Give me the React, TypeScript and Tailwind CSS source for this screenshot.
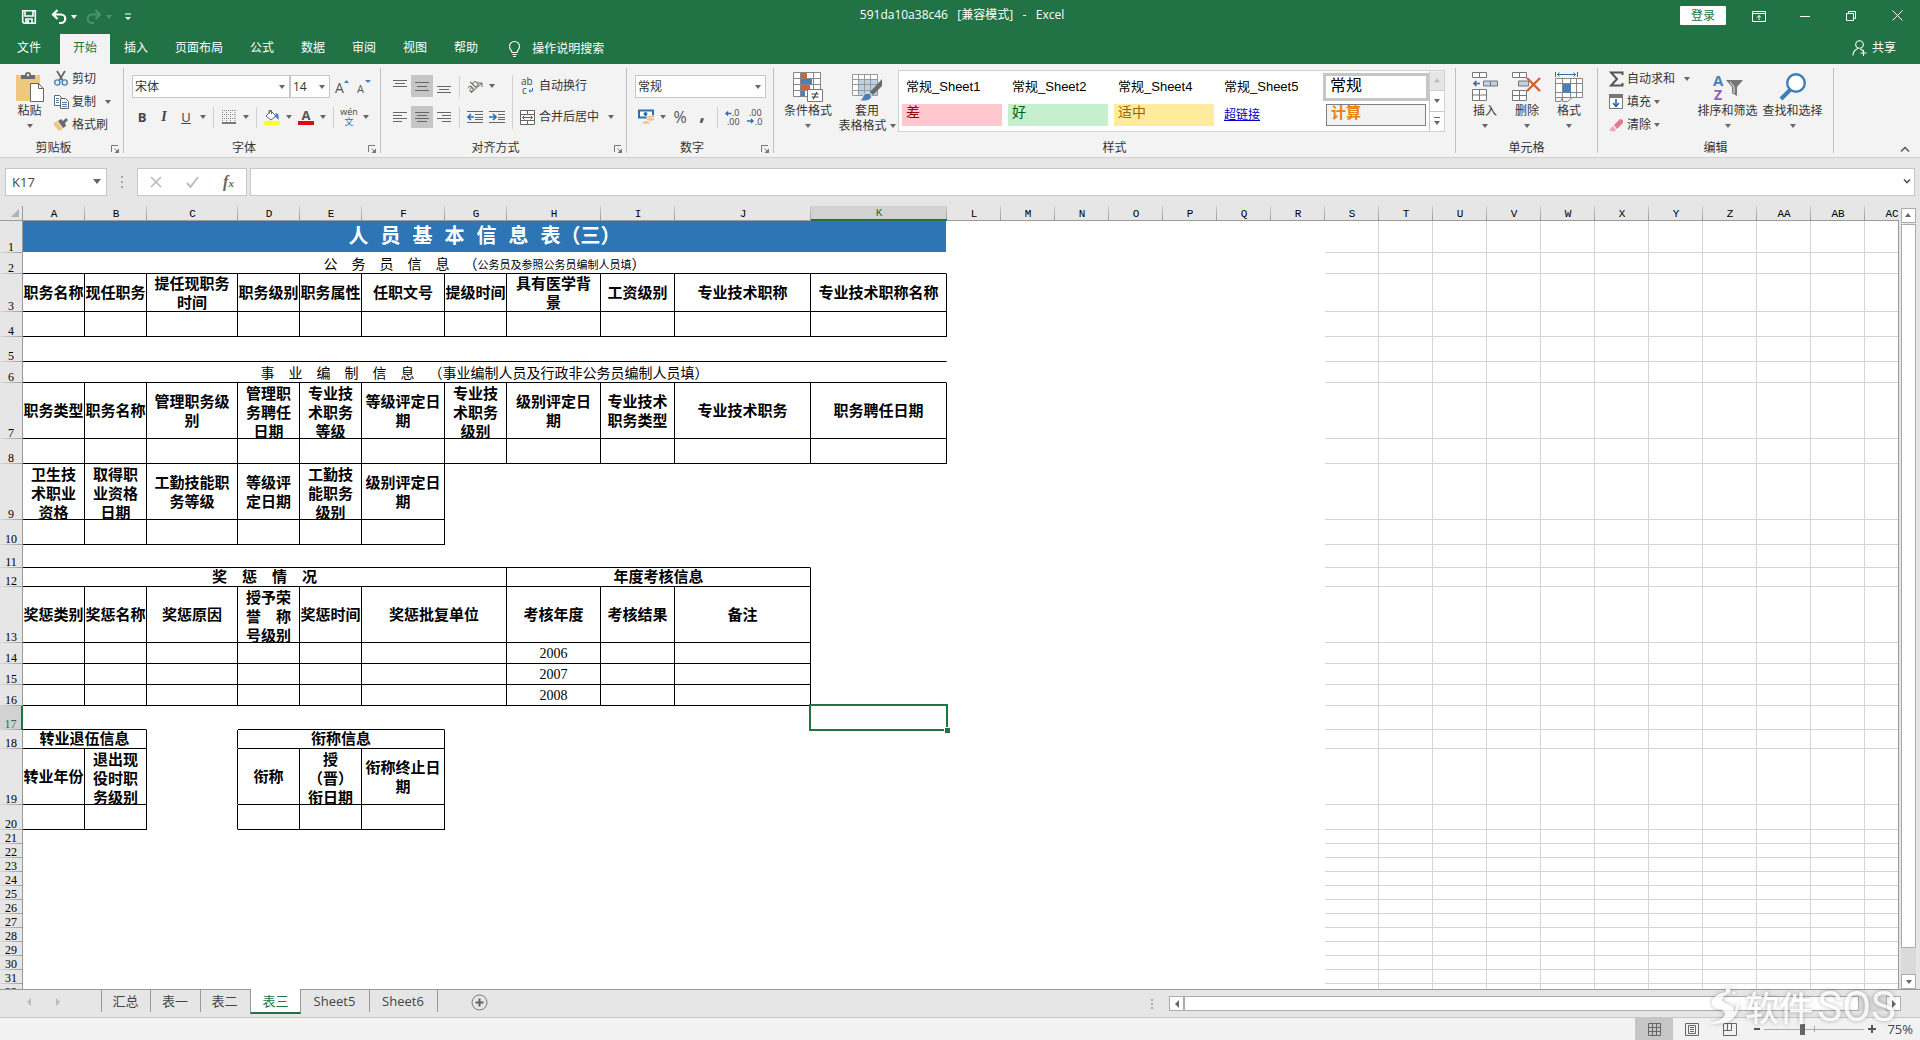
import React from "react";

type IconProps = { children: React.ReactNode; w?: number; h?: number };

function Svg({ children, w = 16, h = 16 }: IconProps) {
  return (
    <svg width={w} height={h} viewBox={`0 0 ${w} ${h}`} fill="none" className="shrink-0 overflow-visible" aria-hidden="true">
      {children}
    </svg>
  );
}

function Caret({ color = "#666" }: { color?: string }) {
  return (
    <Svg w={6} h={4}>
      <path d="M0 0h6L3 4z" fill={color} />
    </Svg>
  );
}

/* ---------- Title bar and ribbon tabs ---------- */

function TitleBar() {
  return (
    <header className="flex h-[34px] items-start justify-between bg-[#217346] text-white">
      <div className="flex h-[34px] flex-1 items-center pl-[21px]">
        <button aria-label="保存" className="mr-[14px]">
          <Svg w={16} h={16}>
            <path d="M1.7 1.7h12.6v12.6H3L1.7 13z M4 2v5h8V2 M5 14v-4h6v4" stroke="#fff" strokeWidth="1.6" />
            <path d="M6 11h2v3H6z" fill="#fff" />
          </Svg>
        </button>
        <button aria-label="撤消" className="flex items-center gap-[4px]">
          <Svg w={16} h={16}>
            <path d="M2 5.5h8a4 4 0 0 1 0 8.5H8M6.5 1L2 5.5 6.5 10" stroke="#fff" strokeWidth="2.2" />
          </Svg>
          <Caret color="#fff" />
        </button>
        <button aria-label="恢复" className="ml-[9px] flex items-center gap-[4px]">
          <Svg w={16} h={16}>
            <path d="M14 5.5H6A4 4 0 0 0 6 14h2M9.500 1L14 5.500 9.500 10" stroke="#4f9070" strokeWidth="2" />
          </Svg>
          <Caret color="#4f9070" />
        </button>
        <button aria-label="自定义快速访问工具栏" className="ml-[12px]">
          <Svg w={8} h={8}>
            <path d="M1 1h6" stroke="#fff" />
            <path d="M1 4h6L4 7z" fill="#fff" />
          </Svg>
        </button>
      </div>
      <h1 className="mt-[7px] whitespace-pre text-xs leading-4">591da10a38c46   [兼容模式]   -   Excel</h1>
      <div className="flex flex-1 items-center justify-end pr-[17px] pt-[6px]">
        <button className="mr-[26px] h-[19px] w-[46px] rounded-[1px] bg-white text-xs leading-4 text-[#217346]">登录</button>
        <button aria-label="功能区显示选项" className="mr-[34px]">
          <Svg w={14} h={12}>
            <path d="M.5 1.500h13v10H.5zM.5 3.500h13M7 10V5.500M5 7.500l2-2 2 2" stroke="#fff" />
          </Svg>
        </button>
        <button aria-label="最小化" className="mr-[36px]">
          <Svg w={10} h={10}>
            <path d="M0 5.500h10" stroke="#fff" />
          </Svg>
        </button>
        <button aria-label="还原" className="mr-[36px]">
          <Svg w={10} h={10}>
            <path d="M.5 2.500h7v7h-7zM2.500 2.500v-2h7v7h-2" stroke="#fff" />
          </Svg>
        </button>
        <button aria-label="关闭">
          <Svg w={11} h={11}>
            <path d="M.5.5l10 10M10.500.5l-10 10" stroke="#fff" />
          </Svg>
        </button>
      </div>
    </header>
  );
}

const ribbonTabs = ["插入", "页面布局", "公式", "数据", "审阅", "视图", "帮助"];

function RibbonTabs() {
  return (
    <nav className="flex h-[30px] items-stretch gap-px bg-[#217346] text-xs leading-4 text-white">
      <div className="flex">
        <button className="w-[60px] pb-[3px] pr-[2px]">文件</button>
        <button className="bg-[#f3f3f3] px-[13px] pb-[3px] text-[#217346]">开始</button>
      </div>
      {ribbonTabs.map((t) => (
        <button key={t} className="px-[13px] pb-[3px]">
          {t}
        </button>
      ))}
      <button className="ml-4 flex items-center gap-[11px]">
        <Svg w={13} h={17}>
          <path d="M4 11.500C4 9.500 1.500 8.500 1.500 5.500a5 5 0 0 1 10 0c0 3-2.500 4-2.500 6zM4.500 13.500h4M5 15.500h3" stroke="#fff" strokeWidth="1.100" />
        </Svg>
        操作说明搜索
      </button>
      <button className="ml-auto mr-6 flex items-center gap-[5px] pb-[2px]">
        <Svg w={15} h={16}>
          <circle cx="7.500" cy="4.500" r="3.800" stroke="#fff" strokeWidth="1.100" />
          <path d="M1 15.500c0-4 2-6 5-7M8.500 9c1 .3 1.800 1 2.300 2M11.500 10v6M8.500 13h6" stroke="#fff" strokeWidth="1.100" />
        </Svg>
        共享
      </button>
    </nav>
  );
}

/* ---------- Ribbon ---------- */

function Group({ label, launcher, width, children }: { label: string; launcher?: boolean; width: string; children: React.ReactNode }) {
  return (
    <section aria-label={label} className={`flex shrink-0 ${width}`}>
      <div className="flex min-w-0 flex-1 flex-col">
        <div className="flex flex-1 items-start">{children}</div>
        <div className="flex h-[19px] items-center text-xs leading-4 text-[#333]">
          <span className="flex-1 text-center">{label}</span>
          {launcher && (
            <button aria-label={`${label}设置`} className="mt-1 w-4 pl-1">
              <Svg w={9} h={9}>
                <path d="M.5 7V.5H7M3.500 3.500l3 3" stroke="#777" />
                <path d="M8 3.500V8H3.500z" fill="#777" />
              </Svg>
            </button>
          )}
        </div>
      </div>
      <div className="mt-1 h-[85px] w-px bg-[#c0c0c0]" />
    </section>
  );
}

function Big({ icon, lines, width, inlineCaret }: { icon: React.ReactNode; lines: string[]; width: string; inlineCaret?: boolean }) {
  return (
    <button className={`flex flex-col items-center pt-2 text-xs leading-[15px] text-[#333] ${width}`}>
      <span className="mb-px flex h-[30px] items-center">{icon}</span>
      <span className="whitespace-nowrap">{lines[0]}</span>
      {inlineCaret ? (
        <span className="flex items-center gap-[3px] whitespace-nowrap">
          {lines[1]}
          <Caret />
        </span>
      ) : (
        <span className="flex h-[15px] items-center">
          <Caret />
        </span>
      )}
    </button>
  );
}

function SmallRow({ icon, text, caret }: { icon: React.ReactNode; text: string; caret?: "near" | "far" }) {
  return (
    <button className="flex h-[23px] items-center whitespace-nowrap text-xs leading-4 text-[#333]">
      <span className="mr-[3px] flex w-4 justify-center">{icon}</span>
      {text}
      {caret && (
        <span className={caret === "far" ? "ml-[9px]" : "ml-[3px]"}>
          <Caret />
        </span>
      )}
    </button>
  );
}

function Tool({ label, active, children }: { label: string; active?: boolean; children: React.ReactNode }) {
  return (
    <button aria-label={label} className={`flex h-[22px] w-[22px] items-center justify-center ${active ? "bg-[#c6c6c6]" : ""}`}>
      {children}
    </button>
  );
}

function Drop({ label }: { label: string }) {
  return (
    <button aria-label={label} className="flex h-[22px] w-3 items-center justify-center">
      <Caret />
    </button>
  );
}

const Sep = () => <span className="mx-1 h-[21px] w-px bg-[#d0d0d0]" />;

function Combo({ label, value, width }: { label: string; value: string; width: string }) {
  return (
    <span className={`relative flex ${width}`}>
      <select aria-label={label} className="h-[23px] w-full appearance-none border border-[#c6c6c6] bg-white px-[2px] text-xs leading-4 text-[#333]">
        <option>{value}</option>
      </select>
      <span className="pointer-events-none absolute right-[5px] top-[10px]">
        <Caret />
      </span>
    </span>
  );
}

function Bars({ rows }: { rows: [number, number, number][] }) {
  return (
    <Svg w={14} h={16}>
      {rows.map(([x, y, w]) => (
        <path key={y} d={`M${x} ${y + 0.5}h${w}`} stroke="#666" />
      ))}
    </Svg>
  );
}

const TextIcon = ({ x, y, size, fill, children, bold }: { x: number; y: number; size: number; fill: string; children: string; bold?: boolean }) => (
  <text x={x} y={y} fontSize={size} fill={fill} fontWeight={bold ? 700 : 400}>
    {children}
  </text>
);

function ClipboardGroup() {
  return (
    <Group label="剪贴板" launcher width="w-[124px]">
      <div className="w-[6px]" />
      <Big
        width="w-[47px]"
        lines={["粘贴"]}
        icon={
          <Svg w={28} h={30}>
            <rect x="0" y="3" width="24" height="26" fill="#edc87e" />
            <path d="M5 7V3h4a3 3 0 0 1 6 0h4v4z" fill="#6b6b6b" />
            <circle cx="12" cy="3" r="1.200" fill="#f3f3f3" />
            <path d="M14.500 11.500h8l5 5v13h-13z" fill="#fff" stroke="#666" />
            <path d="M22.500 11.500v5h5" stroke="#666" />
          </Svg>
        }
      />
      <div className="flex flex-col pt-[3px]">
        <SmallRow
          text="剪切"
          icon={
            <Svg w={14} h={15}>
              <path d="M3 0l5.500 9M11 0L5.500 9" stroke="#666" strokeWidth="1.800" />
              <circle cx="3.300" cy="11.500" r="2.600" stroke="#4a80b5" strokeWidth="1.400" />
              <circle cx="10.700" cy="11.500" r="2.600" stroke="#4a80b5" strokeWidth="1.400" />
            </Svg>
          }
        />
        <SmallRow
          text="复制"
          caret="far"
          icon={
            <Svg w={15} h={14}>
              <path d="M.5.5h5l2 2v8h-7z" fill="#fff" stroke="#666" />
              <path d="M6.500 3.500h5l3 3v7h-8z" fill="#fff" stroke="#666" />
              <path d="M2 3.500h3M2 5.500h3M2 7.500h3M8 7.500h5M8 9.500h5M8 11.500h5" stroke="#4a80b5" />
            </Svg>
          }
        />
        <SmallRow
          text="格式刷"
          icon={
            <Svg w={16} h={14}>
              <path d="M0 6l6 7 4-2-6-8z" fill="#edc87e" />
              <path d="M5 3l5 7 3-2-1-3 3-3-2-2-3 3-2-2z" fill="#6b6b6b" />
            </Svg>
          }
        />
      </div>
    </Group>
  );
}

function FontGroup() {
  return (
    <Group label="字体" launcher width="w-[257px]">
      <div className="flex flex-col gap-2 pl-[7px] pt-[11px] text-[#444]">
        <div className="flex items-center pl-px">
          <Combo label="字体名称" value="宋体" width="w-[158px]" />
          <Combo label="字号" value="14" width="w-10" />
          <Tool label="增大字号">
            <Svg w={15} h={16}>
              <TextIcon x={1} y={14} size={14} fill="#555">A</TextIcon>
              <path d="M10 4l2.500-3L15 4z" fill="#4a80b5" />
            </Svg>
          </Tool>
          <Tool label="减小字号">
            <Svg w={15} h={16}>
              <TextIcon x={1} y={14} size={11} fill="#555">A</TextIcon>
              <path d="M9 1h6l-3 3z" fill="#4a80b5" />
            </Svg>
          </Tool>
        </div>
        <div className="flex items-center text-[13px] leading-4">
          <Tool label="加粗"><b>B</b></Tool>
          <Tool label="倾斜"><i className="font-['Liberation_Serif',serif] text-sm font-bold">I</i></Tool>
          <Tool label="下划线"><u>U</u></Tool>
          <Drop label="下划线选项" />
          <Sep />
          <Tool label="边框">
            <Svg w={14} h={14}>
              <path d="M.5 0v13M4.500 0v13M8.500 0v13M13 0v13M0 .5h13M0 4.500h13M0 8.500h13" stroke="#888" strokeDasharray="1 1" />
              <path d="M0 13h14" stroke="#555" strokeWidth="1.500" />
            </Svg>
          </Tool>
          <Drop label="边框选项" />
          <Sep />
          <Tool label="填充颜色">
            <Svg w={17} h={16}>
              <path d="M2 7l5-5 5 5-5 4z" fill="#fff" stroke="#666" />
              <path d="M5 5V1.500h2.500V5" stroke="#666" />
              <path d="M12 4c3 1 3 4 2.500 7-1-1-2-3-4-3z" fill="#4a80b5" />
              <rect y="12" width="16" height="4" fill="#ff2" />
            </Svg>
          </Tool>
          <Drop label="填充颜色选项" />
          <Tool label="字体颜色">
            <Svg w={16} h={16}>
              <TextIcon x={3.5} y={11} size={13} fill="#555" bold>A</TextIcon>
              <rect y="12" width="16" height="4" fill="#e00b0b" />
            </Svg>
          </Tool>
          <Drop label="字体颜色选项" />
          <Sep />
          <Tool label="拼音">
            <span className="flex flex-col text-center text-[9px] leading-[10px]">
              <span>wén</span>
              <span className="text-[#2f6fae]">文</span>
            </span>
          </Tool>
          <Drop label="拼音选项" />
        </div>
      </div>
    </Group>
  );
}

function AlignGroup() {
  return (
    <Group label="对齐方式" launcher width="w-[246px]">
      <div className="flex pl-2 pt-[11px] text-xs leading-4 text-[#333]">
        <div className="flex flex-col gap-[9px]">
          <div className="flex items-center">
            <Tool label="顶端对齐"><Bars rows={[[0, 2, 14], [2, 5, 10], [0, 8, 14]]} /></Tool>
            <Tool label="垂直居中" active><Bars rows={[[0, 4, 14], [2, 8, 10], [0, 12, 14]]} /></Tool>
            <Tool label="底端对齐"><Bars rows={[[0, 8, 14], [2, 11, 10], [0, 14, 14]]} /></Tool>
            <Sep />
            <Tool label="方向">
              <Svg w={16} h={16}>
                <g transform="rotate(-45 8 8)"><TextIcon x={0} y={10} size={11} fill="#555">ab</TextIcon></g>
                <path d="M4 15L15 5M15 9V5h-4" stroke="#666" />
              </Svg>
            </Tool>
            <Drop label="方向选项" />
          </div>
          <div className="flex items-center">
            <Tool label="左对齐"><Bars rows={[[0, 3, 14], [0, 6, 9], [0, 9, 14], [0, 12, 9]]} /></Tool>
            <Tool label="居中" active><Bars rows={[[0, 3, 14], [2, 6, 10], [0, 9, 14], [2, 12, 10]]} /></Tool>
            <Tool label="右对齐"><Bars rows={[[0, 3, 14], [5, 6, 9], [0, 9, 14], [5, 12, 9]]} /></Tool>
            <Sep />
            <Tool label="减少缩进量">
              <Svg w={16} h={14}>
                <path d="M0 1.500h16M8 4.500h8M8 7.500h8M8 9.500h8M0 12.500h16" stroke="#666" />
                <path d="M7 7H2M4 4L1 7l3 3" stroke="#2f6fae" strokeWidth="1.700" />
              </Svg>
            </Tool>
            <Tool label="增加缩进量">
              <Svg w={16} h={14}>
                <path d="M0 1.500h16M9 4.500h7M9 7.500h7M9 9.500h7M0 12.500h16" stroke="#666" />
                <path d="M0 7h6M4 4l3 3-3 3" stroke="#2f6fae" strokeWidth="1.700" />
              </Svg>
            </Tool>
          </div>
        </div>
        <span className="ml-1 h-[54px] w-px bg-[#d0d0d0]" />
        <div className="ml-[7px] flex flex-col gap-[9px]">
          <button className="flex h-[22px] items-center gap-1">
            <Svg w={15} h={16}>
              <TextIcon x={1} y={7} size={10} fill="#444">ab</TextIcon>
              <TextIcon x={2} y={16} size={10} fill="#444">c</TextIcon>
              <path d="M12.500 10v3H9M10.500 11.500L9 13l1.500 1.500" stroke="#2f6fae" />
            </Svg>
            自动换行
          </button>
          <button className="flex h-[22px] items-center gap-1">
            <Svg w={15} h={15}>
              <path d="M.5.5h14v14H.5zM.5 4.500h14M.5 10.500h14M7.500.5v4M7.500 10.500v4" fill="#fff" stroke="#666" />
              <path d="M2.500 7.500h10M4.500 5.500l-2 2 2 2M10.500 5.500l2 2-2 2" stroke="#2f6fae" />
            </Svg>
            合并后居中
            <span className="ml-[5px]"><Caret /></span>
          </button>
        </div>
      </div>
    </Group>
  );
}

function NumberGroup() {
  return (
    <Group label="数字" launcher width="w-[147px]">
      <div className="flex flex-col gap-2 pl-2 pt-[11px]">
        <Combo label="数字格式" value="常规" width="w-[131px]" />
        <div className="flex items-center text-base leading-4 text-[#555]">
          <Tool label="会计数字格式">
            <Svg w={17} h={16}>
              <path d="M1 1.500h14v7H1z" fill="#fff" stroke="#2f6fae" strokeWidth="2" />
              <circle cx="7.500" cy="5" r="2" fill="#2f6fae" />
              <ellipse cx="12.500" cy="8" rx="4" ry="1.700" fill="#edc08a" stroke="#fff" strokeWidth=".6" />
              <ellipse cx="12.500" cy="10.500" rx="4" ry="1.700" fill="#edc08a" stroke="#fff" strokeWidth=".6" />
              <ellipse cx="8" cy="13.500" rx="4" ry="1.700" fill="#edc08a" stroke="#fff" strokeWidth=".6" />
            </Svg>
          </Tool>
          <Drop label="会计数字格式选项" />
          <Tool label="百分比样式">%</Tool>
          <Tool label="千位分隔样式"><b className="pb-2 text-xl leading-4">,</b></Tool>
          <Sep />
          <Tool label="增加小数位数">
            <Svg w={16} h={16}>
              <TextIcon x={7} y={7} size={9} fill="#444">.0</TextIcon>
              <TextIcon x={2} y={16} size={9} fill="#444">.00</TextIcon>
              <path d="M6.500 4.500H1M3 2.500l-2 2 2 2" stroke="#2f6fae" strokeWidth="1.400" />
            </Svg>
          </Tool>
          <Tool label="减少小数位数">
            <Svg w={16} h={16}>
              <TextIcon x={2} y={7} size={9} fill="#444">.00</TextIcon>
              <TextIcon x={8} y={16} size={9} fill="#444">.0</TextIcon>
              <path d="M0 12h6M4 10l2 2-2 2" stroke="#2f6fae" strokeWidth="1.400" />
            </Svg>
          </Tool>
        </div>
      </div>
    </Group>
  );
}

function StylesGroup() {
  const plain = "flex h-7 items-center pl-[7px] text-[13px] leading-4 text-black";
  const chip = "mx-[3px] flex h-[22px] items-start px-1 text-sm leading-4";
  return (
    <Group label="样式" width="w-[682px]">
      <div className="w-[9px]" />
      <Big
        width="w-[50px]"
        lines={["条件格式"]}
        icon={
          <Svg w={30} h={30}>
            <path d="M.5.5h27v24H.5zM.5 6.500h27M.5 12.500h27M.5 18.500h27M7.500.5v24M20.500.5v24" fill="#fff" stroke="#888" />
            <path d="M8 1h6v5H8zM8 13h9v5H8z" fill="#d2603a" />
            <path d="M8 7h11v5H8zM8 19h4v5H8z" fill="#4a80b5" />
            <path d="M14.500 17.500h15v12h-15z" fill="#fff" stroke="#777" />
            <path d="M18.500 22h7M18.500 25h7M24 20l-4 7.500" stroke="#444" strokeWidth="1.200" />
          </Svg>
        }
      />
      <div className="w-[3px]" />
      <Big
        width="w-[62px]"
        lines={["套用", "表格格式"]}
        inlineCaret
        icon={
          <Svg w={30} h={30}>
            <path d="M.5 2.500h25v21H.5z" fill="#fff" />
            <path d="M7 8h18v15H7z" fill="#bcd0e6" />
            <path d="M.5 2.500h25v21H.5zM.5 7.500h25M.5 12.500h25M.5 18.500h25M6.500 2.500v21M12.500 2.500v21M18.500 2.500v21" stroke="#999" />
            <path d="M30 7v7l-9 9-3-3z" fill="#6b6b6b" />
            <path d="M7 29c4-1 3-7 8-8 3-.5 6 3 3.500 6-2.500 2.500-7 2-11.500 2z" fill="#4a80b5" stroke="#f3f3f3" />
          </Svg>
        }
      />
      <div className="mt-[6px] flex h-[62px] border border-[#d0d0d0] bg-white">
        <div className="grid grid-cols-[repeat(5,106px)] content-start gap-y-[3px] pt-[2px] text-left font-['Liberation_Sans','Noto_Sans_CJK_SC',sans-serif]">
          <button className={plain}>常规_Sheet1</button>
          <button className={plain}>常规_Sheet2</button>
          <button className={plain}>常规_Sheet4</button>
          <button className={plain}>常规_Sheet5</button>
          <button className="flex h-7 items-center border-[3px] border-[#c6c6c6] px-1 pb-[2px] text-base leading-4 text-black">常规</button>
          <button className={`${chip} bg-[#ffc7ce] text-[#9c0006]`}>差</button>
          <button className={`${chip} bg-[#c6efce] text-[#006100]`}>好</button>
          <button className={`${chip} bg-[#ffeb9c] text-[#9c6500]`}>适中</button>
          <a href="#link" className="flex h-[22px] items-center pl-[7px] text-xs text-[#0000c8] underline">超链接</a>
          <button className="mx-[3px] flex h-[22px] items-start border border-[#7f7f7f] bg-[#f2f2f2] px-1 text-[15px] font-bold leading-4 text-[#e8820c]">计算</button>
        </div>
        <div className="flex w-[15px] flex-col">
          <button aria-label="向上滚动" className="flex flex-1 rotate-180 items-center justify-center border-r border-[#d0d0d0] bg-[#e6e6e6]"><Caret color="#bbb" /></button>
          <button aria-label="向下滚动" className="flex flex-1 items-center justify-center border-l border-t border-[#c6c6c6]"><Caret /></button>
          <button aria-label="其他样式" className="flex flex-1 items-center justify-center border-l border-t border-[#c6c6c6]">
            <Svg w={8} h={8}>
              <path d="M1 .5h6" stroke="#666" />
              <path d="M1 4h6L4 8z" fill="#666" />
            </Svg>
          </button>
        </div>
      </div>
    </Group>
  );
}

function CellsGroup() {
  return (
    <Group label="单元格" width="w-[142px]">
      <div className="w-2" />
      <Big
        width="w-[42px]"
        lines={["插入"]}
        icon={
          <Svg w={28} h={30}>
            <path d="M1.500.5h14v5h-14zM8.500.5v5M1.500 17.500h14v11h-14zM8.500 17.500v11M1.500 23h14" fill="#fff" stroke="#777" />
            <path d="M12.500 9h14v5h-14zM19.500 9v5" fill="#bcd0e6" stroke="#777" />
            <path d="M9 11.500H3M5.500 9L3 11.500 5.500 14" stroke="#2f6fae" strokeWidth="1.700" />
          </Svg>
        }
      />
      <Big
        width="w-[42px]"
        lines={["删除"]}
        icon={
          <Svg w={30} h={30}>
            <path d="M.5.5h14v5H.5zM7.500.5v5M.5 18.500h14v10H.5zM7.500 18.500v10M.5 23.500h14" fill="#fff" stroke="#777" />
            <path d="M6.500 9h10v5h-10z" fill="#bcd0e6" stroke="#777" />
            <path d="M15 6l13 13M28 6L15 19" stroke="#d2603a" strokeWidth="2.400" />
          </Svg>
        }
      />
      <Big
        width="w-[42px]"
        lines={["格式"]}
        icon={
          <Svg w={28} h={30}>
            <path d="M.5 6.500h27v19H.5zM.5 11.500h27M.5 20.500h27M7.500 6.500v19M15.500 6.500v19M21.500 6.500v19" fill="#fff" stroke="#888" />
            <path d="M8 12h8v9H8z" fill="#4a80b5" />
            <path d="M.5 26v3.500h5l2-4v4h5l5-4" stroke="#888" />
            <path d="M.5 0v5M22.500 0v5M2 2.500h19M4.500.5l-2 2 2 2M18.500.5l2 2-2 2" stroke="#2f6fae" />
          </Svg>
        }
      />
    </Group>
  );
}

function EditGroup() {
  return (
    <Group label="编辑" width="w-[236px]">
      <div className="flex w-[97px] flex-col pl-[10px] pt-[3px]">
        <SmallRow
          text="自动求和"
          caret="far"
          icon={
            <Svg w={15} h={16}>
              <path d="M13.500 4V1.500H2L8 8l-6 6.500h11.500V12" stroke="#555" strokeWidth="2" />
            </Svg>
          }
        />
        <SmallRow
          text="填充"
          caret="near"
          icon={
            <Svg w={14} h={15}>
              <path d="M.5.5h13v14H.5z" fill="#fff" stroke="#777" />
              <path d="M0 0h14v4H0z" fill="#777" />
              <path d="M7 5v7M4 9l3 3.500L10 9" stroke="#2f6fae" strokeWidth="1.700" />
            </Svg>
          }
        />
        <SmallRow
          text="清除"
          caret="near"
          icon={
            <Svg w={14} h={14}>
              <path d="M5 7l6-6 3 1v3L8 11z" fill="#e4788c" />
              <path d="M4 8l3 4-2 1.500L1 13v-2z" fill="#f0a5b2" />
            </Svg>
          }
        />
      </div>
      <Big
        width="w-[65px]"
        lines={["排序和筛选"]}
        icon={
          <Svg w={30} h={30}>
            <TextIcon x={0} y={14} size={15} fill="#4a80b5" bold>A</TextIcon>
            <TextIcon x={1} y={28} size={14} fill="#9160b0" bold>Z</TextIcon>
            <path d="M13 8h17l-6 7v9l-5-3v-6z" fill="#777" />
            <path d="M17 10l4 5v6" stroke="#f3f3f3" />
          </Svg>
        }
      />
      <Big
        width="w-[65px]"
        lines={["查找和选择"]}
        icon={
          <Svg w={28} h={30}>
            <circle cx="17" cy="11" r="8.800" fill="#fff" stroke="#3f7cb8" strokeWidth="2.400" />
            <path d="M11 18L2 27" stroke="#3f7cb8" strokeWidth="4" />
          </Svg>
        }
      />
    </Group>
  );
}

function Ribbon() {
  return (
    <div className="flex h-[94px] border-b border-[#d0d0d0] bg-[#f3f3f3]">
      <ClipboardGroup />
      <FontGroup />
      <AlignGroup />
      <NumberGroup />
      <StylesGroup />
      <CellsGroup />
      <EditGroup />
      <button aria-label="折叠功能区" className="mb-1 ml-auto mr-[10px] self-end">
        <Svg w={10} h={8}>
          <path d="M1 6.500l4-4 4 4" stroke="#555" strokeWidth="1.500" />
        </Svg>
      </button>
    </div>
  );
}

/* ---------- Formula bar ---------- */

function FormulaBar() {
  return (
    <div className="flex items-center px-[5px] pb-[10px] pt-[10px]">
      <div className="relative">
        <input aria-label="名称框" defaultValue="K17" className="block h-7 w-[102px] border border-[#c6c6c6] bg-white px-[6px] text-[13px] leading-4 text-[#444]" />
        <span className="pointer-events-none absolute right-[6px] top-[11px]">
          <Svg w={8} h={5}>
            <path d="M0 0h8L4 5z" fill="#666" />
          </Svg>
        </span>
      </div>
      <div className="flex w-[30px] justify-center">
        <Svg w={2} h={12}>
          <path d="M0 0h2v2H0zM0 5h2v2H0zM0 10h2v2H0z" fill="#aaa" />
        </Svg>
      </div>
      <div className="flex h-7 w-[110px] items-center justify-around border border-[#c6c6c6] bg-white">
        <button aria-label="取消">
          <Svg w={12} h={12}>
            <path d="M1 1l10 10M11 1L1 11" stroke="#bbb" strokeWidth="1.600" />
          </Svg>
        </button>
        <button aria-label="输入">
          <Svg w={13} h={12}>
            <path d="M1 7l3.500 4L12 1" stroke="#bbb" strokeWidth="1.900" />
          </Svg>
        </button>
        <button aria-label="插入函数" className="font-['Liberation_Serif',serif] text-base font-bold italic leading-4 text-[#666]">
          f<span className="text-[11px]">x</span>
        </button>
      </div>
      <div className="relative ml-[3px] flex-1">
        <input aria-label="编辑栏" className="block h-7 w-full border border-[#c6c6c6] bg-white px-2" />
        <button aria-label="展开编辑栏" className="absolute right-1 top-[10px]">
          <Svg w={8} h={7}>
            <path d="M1 1.500l3 3 3-3" stroke="#555" strokeWidth="1.700" />
          </Svg>
        </button>
      </div>
    </div>
  );
}

/* ---------- Worksheet ---------- */

// One cell: text, column span, black edges ("r" right, "b" bottom), optional face.
type Cell = [string, number, string, string?];
type Row = { h: string; box?: string; cells: Cell[] };

const empty = (n: number, edge = "rb"): Cell[] => Array.from({ length: n }, () => ["", 1, edge] as Cell);
const heads = (...t: string[]): Cell[] => t.map((s) => [s, 1, "rb"] as Cell);

const rows: Row[] = [
  { h: "h-8", cells: [["人 员 基 本 信 息 表（三）", 11, "", "title"]] },
  { h: "h-[21px]", cells: [["公　务　员　信　息　（|公务员及参照公务员编制人员填|）", 11, "b", "note"]] },
  { h: "h-[38px]", box: "h-[37px]", cells: heads("职务名称", "现任职务", "提任现职务\n时间", "职务级别", "职务属性", "任职文号", "提级时间", "具有医学背\n景", "工资级别", "专业技术职称", "专业技术职称名称") },
  { h: "h-[25px]", cells: empty(11) },
  { h: "h-[25px]", cells: [["", 11, "b"]] },
  { h: "h-[21px]", cells: [["事　业　编　制　信　息　（事业编制人员及行政非公务员编制人员填）", 11, "b", "note"]] },
  { h: "h-14", box: "h-[55px]", cells: heads("职务类型", "职务名称", "管理职务级\n别", "管理职\n务聘任\n日期", "专业技\n术职务\n等级", "等级评定日\n期", "专业技\n术职务\n级别", "级别评定日\n期", "专业技术\n职务类型", "专业技术职务", "职务聘任日期") },
  { h: "h-[25px]", cells: empty(11) },
  { h: "h-14", box: "h-[55px]", cells: [...heads("卫生技\n术职业\n资格", "取得职\n业资格\n日期", "工勤技能职\n务等级", "等级评\n定日期", "工勤技\n能职务\n级别", "级别评定日\n期"), ["", 5, ""]] },
  { h: "h-[25px]", cells: [...empty(6), ["", 5, ""]] },
  { h: "h-[23px]", cells: [["", 10, "b"], ["", 1, ""]] },
  { h: "h-[19px]", cells: [["奖　惩　情　况", 7, "rb"], ["年度考核信息", 3, "rb"], ["", 1, ""]] },
  { h: "h-14", box: "h-[55px]", cells: [...heads("奖惩类别", "奖惩名称", "奖惩原因", "授予荣\n誉　称\n号级别", "奖惩时间"), ["奖惩批复单位", 2, "rb"], ...heads("考核年度", "考核结果", "备注"), ["", 1, ""]] },
  ...["2006", "2007", "2008"].map(
    (y): Row => ({ h: "h-[21px]", cells: [...empty(5), ["", 2, "rb"], [y, 1, "rb", "year"], ...empty(2), ["", 1, ""]] })
  ),
  { h: "h-6", cells: [["", 2, "b"], ["", 1, ""], ["", 3, "b"], ["", 4, ""], ["", 1, "", "selected"]] },
  { h: "h-[19px]", cells: [["转业退伍信息", 2, "rb"], ["", 1, "r"], ["衔称信息", 3, "rb"], ["", 5, ""]] },
  { h: "h-14", box: "h-[55px]", cells: [...heads("转业年份", "退出现\n役时职\n务级别"), ["", 1, "r"], ...heads("衔称", "授\n（晋）\n衔日期", "衔称终止日\n期"), ["", 5, ""]] },
  { h: "h-[25px]", cells: [...empty(2), ["", 1, "r"], ...empty(3), ["", 5, ""]] },
  ...Array.from({ length: 12 }, (): Row => ({ h: "h-[14px]", cells: [["", 11, ""]] })),
];

const columns = "A B C D E F G H I J K L M N O P Q R S T U V W X Y Z AA AB AC".split(" ");
const firstWidths = ["w-[62px]", "w-[62px]", "w-[91px]", "w-[62px]", "w-[62px]", "w-[83px]", "w-[62px]", "w-[94px]", "w-[74px]", "w-[136px]", "w-[136px]"];

function edgeClass(edge: string) {
  const r = edge.includes("r") ? "border-r-black" : "border-r-transparent";
  const b = edge.includes("b") ? "border-b-black" : "border-b-transparent";
  return `border-r border-b ${r} ${b}`;
}

function SheetCell({ cell, box }: { cell: Cell; box?: string }) {
  const [text, span, edge, face] = cell;
  if (face === "title") {
    return (
      <td colSpan={span} className="whitespace-nowrap border-b border-r border-white bg-[#2e75b6] p-0 pt-[2px] text-center align-middle font-['Liberation_Mono','Noto_Sans_CJK_TC',monospace] text-xl font-bold leading-7 text-white">
        {text}
      </td>
    );
  }
  if (face === "note") {
    const [lead, small, tail] = text.split("|");
    return (
      <td colSpan={span} className={`whitespace-nowrap p-0 pb-px text-center align-middle text-sm leading-4 ${edgeClass(edge)}`}>
        {lead}
        {small && <span className="text-[11px] leading-3">{small}</span>}
        {tail}
      </td>
    );
  }
  if (face === "year") {
    return <td className={`p-0 pt-[2px] text-center align-middle font-['Liberation_Serif',serif] text-sm leading-4 ${edgeClass(edge)}`}>{text}</td>;
  }
  if (face === "selected") {
    return (
      <td className={`relative p-0 ${edgeClass(edge)}`}>
        <div className="absolute -inset-[2px] border-2 border-[#217346]" />
        <div className="absolute -bottom-[4px] -right-[4px] h-[6px] w-[6px] border-l border-t border-white bg-[#217346]" />
      </td>
    );
  }
  const lineCount = text.split("\n").length;
  const fit =
    lineCount > 2 ? "items-start leading-[19px]" : lineCount === 2 ? "items-center pb-[2px] leading-[19px]" : "items-center pb-[2px] leading-4";
  return (
    <td colSpan={span} className={`p-0 text-center align-middle text-[15px] font-bold ${edgeClass(edge)}`}>
      {text && <div className={`flex justify-center overflow-hidden whitespace-pre ${fit} ${box ?? "h-[18px]"}`}>{text}</div>}
    </td>
  );
}

function Sheet() {
  return (
    <table className="w-full min-w-[1919px] table-fixed border-separate border-spacing-0 bg-white text-black [text-spacing-trim:space-all]">
      <colgroup>
        <col className="w-[23px]" />
        {columns.map((c, i) => (
          <col key={c} className={i < 11 ? firstWidths[i] : c === "AC" ? "" : "w-[54px]"} />
        ))}
      </colgroup>
      <thead>
        <tr className="h-[15px]">
          <th aria-label="全选" className="border-b border-r border-[#9b9b9b] bg-[#e6e6e6] p-0">
            <div className="flex justify-end pr-[3px]">
              <Svg w={8} h={8}>
                <path d="M8 0v8H0z" fill="#b2b2b2" />
              </Svg>
            </div>
          </th>
          {columns.map((c) => (
            <th
              key={c}
              scope="col"
              className={`h-[15px] bg-[linear-gradient(#d0d0d0,#9b9b9b)] bg-[length:1px_100%] bg-right bg-no-repeat p-0 pt-px text-center font-['Liberation_Mono',monospace] text-[11px] font-normal leading-3 ${
                c === "K" ? "border-b-2 border-[#217346] bg-[#d2d2d2] text-[#217346]" : "border-b border-[#9b9b9b] bg-[#e6e6e6]"
              }`}
            >
              {c}
            </th>
          ))}
        </tr>
      </thead>
      <tbody>
        {rows.map((r, i) => (
          <tr key={i} className={r.h}>
            <th
              scope="row"
              className={`overflow-hidden bg-[linear-gradient(90deg,#d8d8d8,#9b9b9b)] bg-[length:100%_1px] bg-bottom bg-no-repeat p-0 text-center align-bottom font-['Liberation_Serif',serif] text-xs font-normal leading-3 ${
                i === 16 ? "border-r-2 border-[#217346] bg-[#d2d2d2] text-[#217346]" : "border-r border-[#9b9b9b] bg-[#e6e6e6]"
              }`}
            >
              {i + 1}
            </th>
            {r.cells.map((c, j) => (
              <SheetCell key={j} cell={c} box={r.box} />
            ))}
            <td colSpan={7} className="p-0" />
            {columns.slice(18).map((c) => (
              <td key={c} className="border-b border-r border-[#d4d4d4] p-0" />
            ))}
          </tr>
        ))}
      </tbody>
    </table>
  );
}

function VerticalScroll() {
  return (
    <div className="flex w-[21px] flex-col items-center bg-[#e6e6e6] pr-[2px] pt-[2px]">
      <button aria-label="向上" className="flex h-[15px] w-[15px] rotate-180 items-center justify-center border border-[#ababab] bg-white"><Caret /></button>
      <div className="mt-px w-[15px] flex-1 border border-[#ababab] bg-white" />
      <div className="h-[26px] w-[15px] bg-[#dadada]" />
      <button aria-label="向下" className="flex h-[15px] w-[15px] items-center justify-center border border-[#ababab] bg-white"><Caret /></button>
    </div>
  );
}

/* ---------- Sheet tabs and status bar ---------- */

const Arrow = ({ left, color = "#666" }: { left?: boolean; color?: string }) => (
  <Svg w={4} h={8}>
    <path d={left ? "M4 0v8L0 4z" : "M0 0v8l4-4z"} fill={color} />
  </Svg>
);

function SheetTabs() {
  const tab = "h-[22px] border-r border-[#999] pb-px pr-px text-[13px] leading-5";
  return (
    <div className="flex h-[29px] items-start border-b border-[#c6c6c6]">
      <div className="flex h-[24px] w-[101px] items-center border-t border-[#999] pl-[27px]">
        <button aria-label="上一个" className="mr-[25px]"><Arrow left color="#bbb" /></button>
        <button aria-label="下一个"><Arrow color="#bbb" /></button>
      </div>
      <div className="flex border-t border-[#999]">
        <div className="flex text-[#444]">
          <button className={`${tab} w-[50px] border-l`}>汇总</button>
          <button className={`${tab} w-[50px]`}>表一</button>
          <button className={`${tab} w-[49px] border-r-transparent`}>表二</button>
        </div>
      </div>
      <button className="h-[25px] w-[51px] border-x border-b-2 border-x-[#999] border-b-[#217346] bg-white text-[13px] leading-5 text-[#217346]">表三</button>
      <div className="flex flex-1 items-start border-t border-[#999] text-[#444]">
        <button className={`${tab} w-[69px]`}>Sheet5</button>
        <button className={`${tab} w-[68px]`}>Sheet6</button>
        <button aria-label="新工作表" className="ml-[33px] mt-1">
          <Svg w={17} h={17}>
            <circle cx="8.500" cy="8.500" r="7.500" stroke="#777" />
            <path d="M8.500 4.500v8M4.500 8.500h8" stroke="#666" strokeWidth="2" />
          </Svg>
        </button>
        <div className="ml-auto mr-[22px] mt-[6px] flex items-center">
          <Svg w={2} h={10}>
            <path d="M0 0h2v2H0zM0 4h2v2H0zM0 8h2v2H0z" fill="#aaa" />
          </Svg>
          <button aria-label="向左" className="ml-4 flex h-[15px] w-[15px] items-center justify-center border border-[#ababab] bg-white"><Arrow left /></button>
          <div className="h-[15px] w-[675px] border border-[#ababab] bg-white" />
          <div className="h-[15px] w-[27px] bg-[#dadada]" />
          <button aria-label="向右" className="-mr-[3px] flex h-[15px] w-[15px] items-center justify-center border border-[#ababab] bg-white"><Arrow /></button>
        </div>
      </div>
    </div>
  );
}

function StatusBar() {
  return (
    <footer className="flex h-[22px] items-center justify-end bg-[#f2f2f2] pr-[7px] text-[#444]">
      <button aria-label="普通" className="flex h-[22px] w-[38px] items-center justify-center bg-[#c6c6c6]">
        <Svg w={13} h={13}>
          <path d="M.5.5h12v12H.5zM.5 4.500h12M.5 8.500h12M4.500.5v12M8.500.5v12" stroke="#666" />
        </Svg>
      </button>
      <button aria-label="页面布局" className="flex w-[38px] justify-center">
        <Svg w={14} h={13}>
          <path d="M.5.5h13v12H.5zM3.500 2.500h7v8h-7zM5 4.500h4M5 6.500h4M5 8.500h4" stroke="#666" />
        </Svg>
      </button>
      <button aria-label="分页预览" className="flex w-[38px] justify-center">
        <Svg w={14} h={13}>
          <path d="M.5.5h13v12H.5zM4.500.5v7M8.500.5v7M.5 7.500h8" stroke="#666" />
        </Svg>
      </button>
      <button aria-label="缩小" className="ml-[5px]">
        <Svg w={6} h={6}>
          <path d="M0 3h6" stroke="#555" strokeWidth="2" />
        </Svg>
      </button>
      <div className="relative mx-1 flex h-3 w-[100px] items-center">
        <span className="absolute left-[50px] top-[3px] h-[6px] w-px bg-[#aaa]" />
        <input
          type="range"
          aria-label="缩放"
          min={0}
          max={100}
          defaultValue={37}
          className="relative h-px w-full appearance-none bg-[#aaa] [&::-webkit-slider-thumb]:h-[11px] [&::-webkit-slider-thumb]:w-[5px] [&::-webkit-slider-thumb]:appearance-none [&::-webkit-slider-thumb]:bg-[#666]"
        />
      </div>
      <button aria-label="放大">
        <Svg w={8} h={8}>
          <path d="M0 4h8M4 0v8" stroke="#555" strokeWidth="2" />
        </Svg>
      </button>
      <button className="ml-[11px] text-[13px] leading-4">75%</button>
    </footer>
  );
}

function Watermark() {
  return (
    <div className="pointer-events-none absolute bottom-[13px] right-[24px] flex items-center gap-1 text-white opacity-75 [filter:drop-shadow(0_0_2px_rgba(0,0,0,0.4))]">
      <Svg w={34} h={40}>
        <path d="M20 5C10 6 3 12 5 18c2 5 12 3 13 9 0 4-8 8-16 9 12 3 25-3 25-12 0-8-12-7-12-11 0-3 4-6 10-7z" fill="#fff" />
        <path d="M31 14c3 10-4 21-17 23 9-5 15-12 17-23z" fill="#fff" />
        <circle cx="21" cy="3" r="2.500" fill="#fff" />
        <circle cx="27" cy="6" r="1.500" fill="#fff" />
      </Svg>
      <span className="font-['Noto_Sans_CJK_SC',sans-serif] text-[34px] font-medium leading-9">软件</span>
      <span className="font-['Roboto',sans-serif] text-[42px] leading-9">SOS</span>
    </div>
  );
}

export default function App() {
  return (
    <div
      lang="zh-CN"
      className="relative flex h-screen flex-col overflow-hidden bg-[#e6e6e6] font-['Open_Sans','Noto_Sans_CJK_SC',sans-serif]"
    >
      <TitleBar />
      <RibbonTabs />
      <Ribbon />
      <FormulaBar />
      <main className="flex min-h-0 flex-1">
        <div className="relative min-w-0 flex-1 overflow-hidden font-['Noto_Sans_CJK_SC',sans-serif]">
          <Sheet />
          <span className="absolute bottom-0 right-0 top-[15px] w-px bg-[#999]" />
        </div>
        <VerticalScroll />
      </main>
      <SheetTabs />
      <StatusBar />
      <Watermark />
    </div>
  );
}
